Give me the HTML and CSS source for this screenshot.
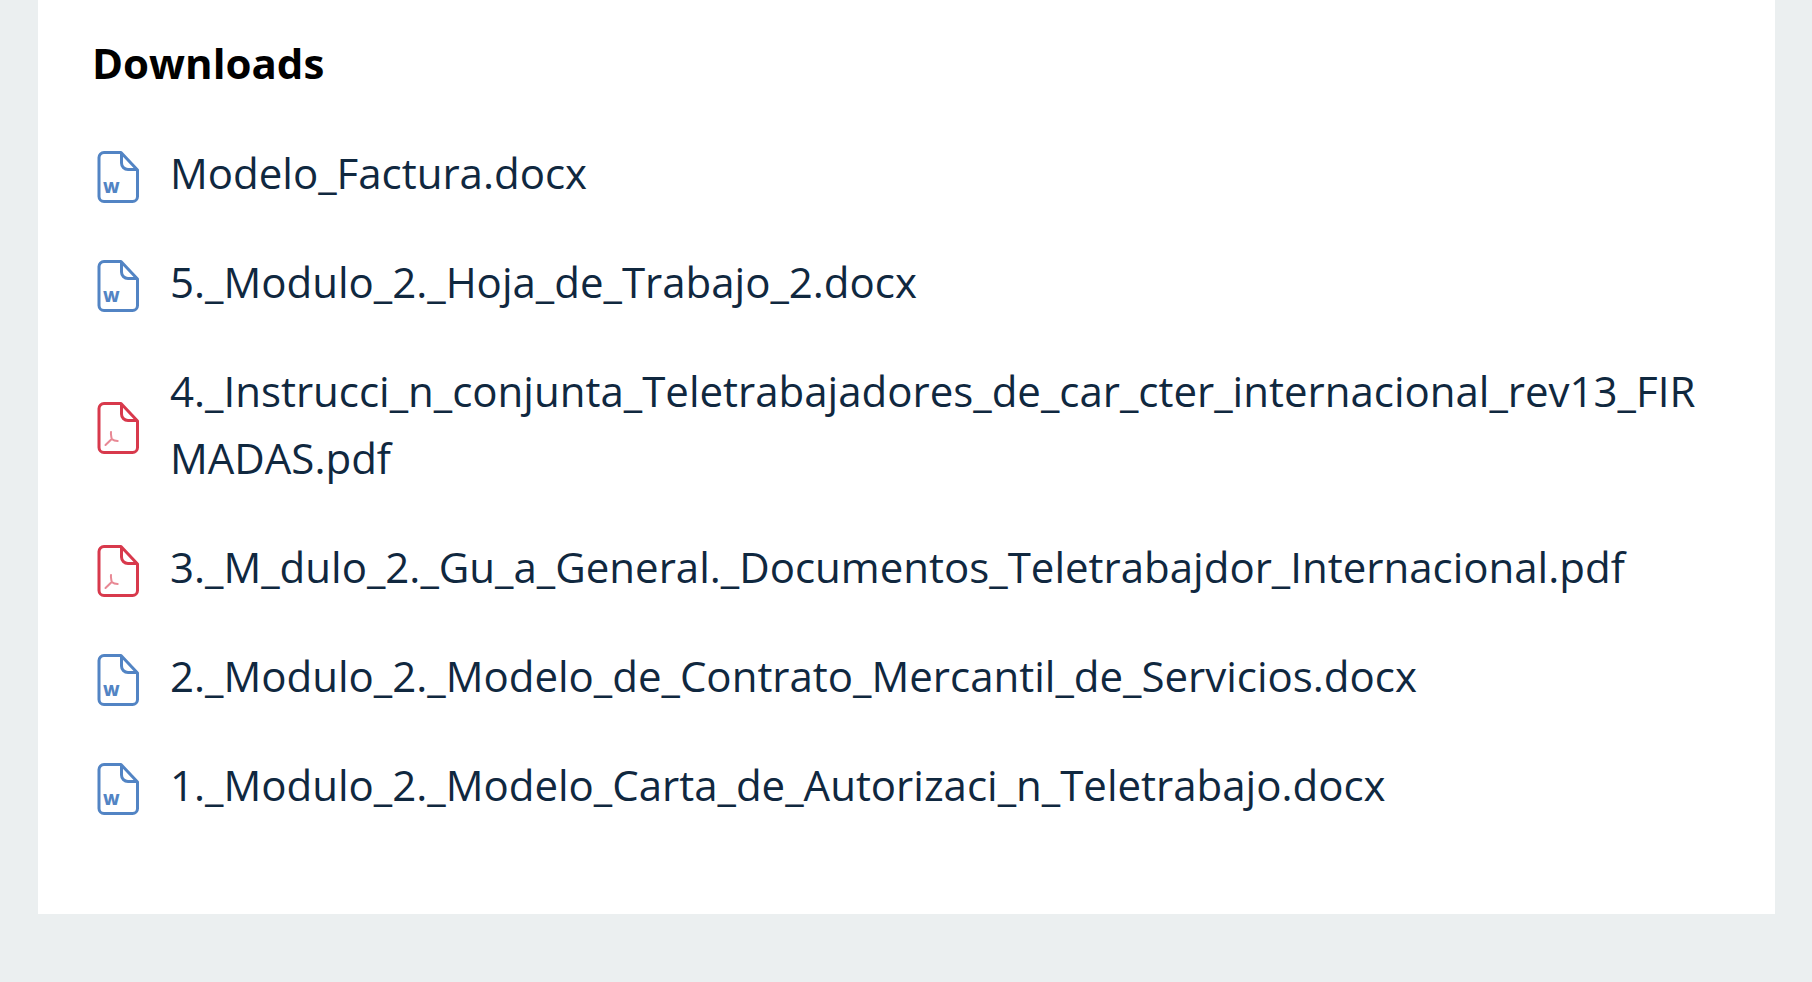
FILE: index.html
```html
<!DOCTYPE html>
<html lang="en">
<head>
<meta charset="utf-8">
<title>Downloads</title>
<link rel="stylesheet" href="styles.css">
</head>
<body>
<svg class="defs" width="0" height="0" aria-hidden="true">
  <symbol id="sheet" viewBox="0 0 44 54">
    <path d="M8 2.500H25L41.500 20V46.500A5 5 0 0 1 36.500 51.500H8A5 5 0 0 1 3 46.500V7.500A5 5 0 0 1 8 2.500Z" fill="none" stroke="currentColor" stroke-width="3" stroke-linejoin="round"/>
    <path d="M25.500 3V13A6.500 6.500 0 0 0 32 19.500H41" fill="none" stroke="currentColor" stroke-width="3" stroke-linejoin="round"/>
  </symbol>
  <symbol id="pdfmark" viewBox="0 0 44 54">
    <path d="M15 31C14.500 34 15.500 36 15.700 38M15.700 38L9.500 44M15.700 38C17.500 39.500 19.500 40 21.700 40" fill="none" stroke="currentColor" stroke-width="2" stroke-linecap="round" opacity=".6"/>
  </symbol>
</svg>
<main class="card">
  <h2 class="title">Downloads</h2>
  <ul class="files">
    <li class="file">
      <span class="icon word"><svg width="44" height="54"><use href="#sheet"/></svg><span class="w">W</span></span>
      <span class="name">Modelo_Factura.docx</span>
    </li>
    <li class="file">
      <span class="icon word"><svg width="44" height="54"><use href="#sheet"/></svg><span class="w">W</span></span>
      <span class="name">5._Modulo_2._Hoja_de_Trabajo_2.docx</span>
    </li>
    <li class="file">
      <span class="icon pdf"><svg width="44" height="54"><use href="#sheet"/><use href="#pdfmark"/></svg></span>
      <span class="name">4._Instrucci_n_conjunta_Teletrabajadores_de_car_cter_internacional_rev13_FIRMADAS.pdf</span>
    </li>
    <li class="file">
      <span class="icon pdf"><svg width="44" height="54"><use href="#sheet"/><use href="#pdfmark"/></svg></span>
      <span class="name">3._M_dulo_2._Gu_a_General._Documentos_Teletrabajdor_Internacional.pdf</span>
    </li>
    <li class="file">
      <span class="icon word"><svg width="44" height="54"><use href="#sheet"/></svg><span class="w">W</span></span>
      <span class="name">2._Modulo_2._Modelo_de_Contrato_Mercantil_de_Servicios.docx</span>
    </li>
    <li class="file">
      <span class="icon word"><svg width="44" height="54"><use href="#sheet"/></svg><span class="w">W</span></span>
      <span class="name">1._Modulo_2._Modelo_Carta_de_Autorizaci_n_Teletrabajo.docx</span>
    </li>
  </ul>
</main>
</body>
</html>
```
FILE: styles.css
```css
* { box-sizing: border-box; }
html, body { margin: 0; height: 982px; overflow: hidden; }
body {
  background: #ebeff0;
  font-family: "Open Sans", sans-serif;
  padding: 0 37px 68px 38px;
}
.defs { position: absolute; }
.card {
  background: #fff;
  height: 914px;
  padding: 36px 56px 0 54px;
}
.title {
  margin: 0;
  font-size: 42px;
  line-height: 54px;
  font-weight: 700;
  color: #000;
}
.files {
  list-style: none;
  margin: 49px 0 0;
  padding: 0;
  display: flex;
  flex-direction: column;
  gap: 42px;
}
.file {
  display: flex;
  align-items: center;
  gap: 31px;
}
.icon {
  position: relative;
  flex: none;
  width: 47px;
  height: 54px;
  padding-left: 4px;
  margin-top: 8px;
}
.icon svg { display: block; }
.word { color: #5284c4; }
.pdf { color: #d8394c; }
.w {
  position: absolute;
  left: 11px;
  top: 28px;
  font-size: 16px;
  line-height: 18px;
  font-weight: 800;
}
.name {
  min-width: 0;
  font-size: 42px;
  line-height: 67px;
  color: #10283f;
  overflow-wrap: anywhere;
}
```
